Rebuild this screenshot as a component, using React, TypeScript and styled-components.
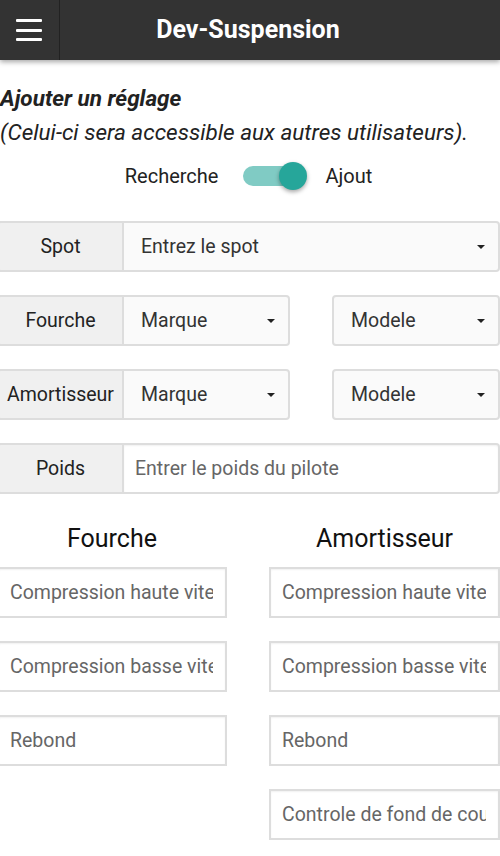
import React from "react";
import styled, { createGlobalStyle } from "styled-components";

const GlobalStyle = createGlobalStyle`
  html, body { margin: 0; padding: 0; background: #ffffff; }
  body { font-family: Roboto, "Noto Sans", "Liberation Sans", sans-serif; color: #222; overflow-x: hidden; }
  * { box-sizing: border-box; }
`;

const Page = styled.div`
  width: 500px;
  overflow: hidden;
`;

const Header = styled.header`
  height: 60px;
  background: #333333;
  display: flex;
  align-items: stretch;
  box-shadow: 0 2px 5px rgba(0, 0, 0, 0.35);
  position: relative;
  z-index: 1;
`;

const MenuButton = styled.div`
  width: 60px;
  border-right: 1px solid #222222;
  display: flex;
  flex-direction: column;
  justify-content: center;
  gap: 6.5px;
  padding-left: 16px;
`;

const MenuLine = styled.span`
  display: block;
  width: 26px;
  height: 3px;
  background: #ffffff;
  border-radius: 1px;
`;

const Title = styled.h1`
  flex: 1;
  margin: 0 0 0 -64px;
  display: flex;
  align-items: center;
  justify-content: center;
  color: #ffffff;
  font-size: 25px;
  font-weight: 700;
  pointer-events: none;
  padding-bottom: 2px;
`;

const Content = styled.main`
  margin-left: -3px;
  width: 503px;
  display: flex;
  flex-direction: column;
`;

const Intro = styled.div`
  padding: 21px 0 0 3px;
  font-size: 22.5px;
  font-style: italic;
  line-height: 34px;
  color: #222;
`;

const IntroTitle = styled.div`
  font-weight: 700;
`;

const ToggleRow = styled.div`
  display: flex;
  align-items: center;
  justify-content: center;
  margin-top: 11px;
  height: 32px;
  font-size: 20px;
  color: #222;
`;

const ToggleLabel = styled.span<{ $gap: number }>`
  margin: 0 ${(p) => p.$gap}px;
`;

const Track = styled.div`
  position: relative;
  width: 60px;
  height: 20px;
  border-radius: 10px;
  background: #80cbc4;
  margin-left: 3px;
`;

const Thumb = styled.div`
  position: absolute;
  right: -4px;
  top: -4px;
  width: 28px;
  height: 28px;
  border-radius: 50%;
  background: #26a69a;
  box-shadow: 0 2px 4px rgba(0, 0, 0, 0.35);
`;

const Form = styled.div`
  display: flex;
  flex-direction: column;
  gap: 23px;
  margin-top: 29px;
`;

const Row = styled.div`
  display: flex;
  align-items: stretch;
  height: 51px;
  gap: 42px;
`;

const Group = styled.div<{ $width?: number }>`
  display: flex;
  align-items: stretch;
  ${(p) => (p.$width ? `width: ${p.$width}px;` : "flex: 1;")}
`;

const Addon = styled.div`
  width: 126px;
  flex: none;
  display: flex;
  align-items: center;
  justify-content: center;
  background: #f0f0f0;
  border: 2px solid #dddddd;
  border-right-width: 1px;
  border-radius: 4px 0 0 4px;
  font-size: 19.5px;
  color: #222;
`;

const SelectBox = styled.div<{ $attached?: boolean }>`
  flex: 1;
  display: flex;
  align-items: center;
  justify-content: space-between;
  background: #fafafa;
  border: 2px solid #dddddd;
  ${(p) => (p.$attached ? "border-left-width: 1px;" : "")}
  border-radius: ${(p) => (p.$attached ? "0 4px 4px 0" : "4px")};
  padding: 0 13px 0 17px;
  font-size: 19.5px;
  color: #333;
`;

const Caret = styled.span`
  width: 0;
  height: 0;
  border-left: 4px solid transparent;
  border-right: 4px solid transparent;
  border-top: 4px solid #222;
  margin-top: 1px;
`;

const TextInput = styled.input<{ $attached?: boolean }>`
  flex: 1;
  min-width: 0;
  height: 100%;
  background: #ffffff;
  border: 2px solid #dddddd;
  ${(p) => (p.$attached ? "border-left-width: 1px; border-radius: 0 4px 4px 0;" : "border-radius: 0;")}
  box-shadow: inset 0 1px 2px rgba(0, 0, 0, 0.06);
  padding: 0 12px 0 11px;
  font-family: Roboto, "Noto Sans", "Liberation Sans", sans-serif;
  font-size: 19.5px;
  color: #333;
  outline: none;
  &::placeholder { color: #666666; opacity: 1; }
`;

const Columns = styled.div`
  display: flex;
  gap: 42px;
  margin-top: 31px;
`;

const Column = styled.div<{ $width: number }>`
  width: ${(p) => p.$width}px;
  display: flex;
  flex-direction: column;
  gap: 23px;
`;

const ColumnTitle = styled.h2`
  margin: 0 0 -9px 0;
  height: 28px;
  line-height: 28px;
  text-align: center;
  font-size: 25px;
  font-weight: 400;
  color: #111;
`;

const FieldBox = styled.div`
  height: 51px;
  display: flex;
`;

const fourcheFields = ["Compression haute vitesse", "Compression basse vitesse", "Rebond"];
const amortoFields = [
  "Compression haute vitesse",
  "Compression basse vitesse",
  "Rebond",
  "Controle de fond de course",
];

export default function App() {
  return (
    <Page>
      <GlobalStyle />
      <Header>
        <MenuButton>
          <MenuLine />
          <MenuLine />
          <MenuLine />
        </MenuButton>
        <Title>Dev-Suspension</Title>
      </Header>
      <Content>
        <Intro>
          <IntroTitle>Ajouter un réglage</IntroTitle>
          <div>(Celui-ci sera accessible aux autres utilisateurs).</div>
        </Intro>
        <ToggleRow>
          <ToggleLabel $gap={22}>Recherche</ToggleLabel>
          <Track>
            <Thumb />
          </Track>
          <ToggleLabel $gap={22}>Ajout</ToggleLabel>
        </ToggleRow>
        <Form>
          <Row>
            <Group>
              <Addon>Spot</Addon>
              <SelectBox $attached>
                <span>Entrez le spot</span>
                <Caret />
              </SelectBox>
            </Group>
          </Row>
          <Row>
            <Group $width={293}>
              <Addon>Fourche</Addon>
              <SelectBox $attached>
                <span>Marque</span>
                <Caret />
              </SelectBox>
            </Group>
            <SelectBox>
              <span>Modele</span>
              <Caret />
            </SelectBox>
          </Row>
          <Row>
            <Group $width={293}>
              <Addon>Amortisseur</Addon>
              <SelectBox $attached>
                <span>Marque</span>
                <Caret />
              </SelectBox>
            </Group>
            <SelectBox>
              <span>Modele</span>
              <Caret />
            </SelectBox>
          </Row>
          <Row>
            <Group>
              <Addon>Poids</Addon>
              <TextInput $attached placeholder="Entrer le poids du pilote" />
            </Group>
          </Row>
        </Form>
        <Columns>
          <Column $width={230}>
            <ColumnTitle>Fourche</ColumnTitle>
            {fourcheFields.map((f) => (
              <FieldBox key={f}>
                <TextInput placeholder={f} />
              </FieldBox>
            ))}
          </Column>
          <Column $width={231}>
            <ColumnTitle>Amortisseur</ColumnTitle>
            {amortoFields.map((f) => (
              <FieldBox key={f}>
                <TextInput placeholder={f} />
              </FieldBox>
            ))}
          </Column>
        </Columns>
      </Content>
    </Page>
  );
}
